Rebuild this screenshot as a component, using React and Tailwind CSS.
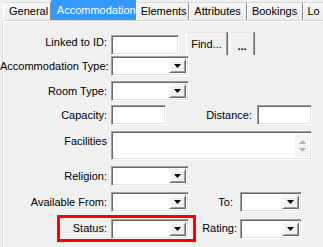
import React from "react";

const Sunken = ({ className = "", children }) => (
  <div
    className={
      "box-border border border-t-[#a0a0a0] border-l-[#a0a0a0] border-r-white border-b-white bg-white shadow-[inset_1px_1px_0_#696969,inset_-1px_-1px_0_#e3e3e3] " +
      className
    }
  >
    {children}
  </div>
);

const Arrow = () => (
  <svg width="7" height="4" viewBox="0 0 7 4">
    <path d="M0 0H7L3.5 4Z" fill="#000" />
  </svg>
);

const Combo = ({ className = "" }) => (
  <Sunken className={"flex justify-end p-[2px] " + className}>
    <div className="box-border w-[17px] h-full flex items-center justify-center bg-[#f0f0f0] border border-t-[#f0f0f0] border-l-[#f0f0f0] border-r-[#696969] border-b-[#696969] shadow-[inset_1px_1px_0_#ffffff,inset_-1px_-1px_0_#a0a0a0]">
      <Arrow />
    </div>
  </Sunken>
);

const Label = ({ className = "", children }) => (
  <div className={"text-right whitespace-nowrap " + className}>{children}</div>
);

const Tab = ({ className = "", children }) => (
  <div
    className={
      "box-border h-[18px] flex items-center border-l border-l-white border-r border-r-[#8c8c8c] border-t border-t-[#d9d9d9] bg-gradient-to-b from-[#f7f7f7] to-[#ebebeb] whitespace-nowrap overflow-hidden " +
      className
    }
  >
    {children}
  </div>
);

export default function App() {
  return (
    <div
      className="w-[323px] h-[247px] overflow-hidden bg-[#f0f0f0] text-[11px] leading-[13px] text-black"
      style={{ fontFamily: '"Liberation Sans", Arial, sans-serif' }}
    >
      {/* tab strip */}
      <div className="flex items-end h-[20px]">
        <Tab className="ml-[3px] w-[49px] pl-[5px] border-l-[#d9d9d9]">General</Tab>
        <div className="box-border h-[20px] w-[87px] flex items-center pl-[6px] bg-[#3399ff] text-white whitespace-nowrap">
          Accommodation
        </div>
        <Tab className="w-[55px] pl-[4px]">Elements</Tab>
        <Tab className="w-[59px] pl-[4px]">Attributes</Tab>
        <Tab className="w-[58px] pl-[4px]">Bookings</Tab>
        <Tab className="w-[20px] pl-[3px] border-r-0">Lo</Tab>
      </div>

      {/* panel */}
      <div className="ml-[2px] h-[227px] border-t border-l border-[#d9d9d9] shadow-[inset_1px_1px_0_#ffffff]">
        {/* Linked to ID */}
        <div className="flex items-start -ml-[3px] mt-[11px] h-[23px]">
          <Label className="w-[107px] mt-[4px]">Linked to ID:</Label>
          <Sunken className="ml-[4px] mt-[3px] w-[68px] h-[20px]" />
          <div className="box-border ml-[7px] w-[41px] h-[23px] flex items-center justify-center border-t border-t-[#e3e3e3] border-l border-l-white border-r border-r-[#a0a0a0] shadow-[1px_0_0_#696969]">
            Find...
          </div>
          <div className="box-border ml-[3px] w-[24px] h-[23px] flex items-center justify-center border-t border-t-[#e3e3e3] border-l border-l-white border-r border-r-[#a0a0a0] shadow-[1px_0_0_#696969] font-bold pt-[5px]">
            ...
          </div>
        </div>

        {/* Accommodation Type */}
        <div className="flex items-center -ml-[3px] mt-[1px] h-[20px]">
          <Label className="w-[107px]">Accommodation Type:</Label>
          <Combo className="ml-[4px] w-[78px] h-[20px]" />
        </div>

        {/* Room Type */}
        <div className="flex items-center -ml-[3px] mt-[5px] h-[20px]">
          <Label className="w-[107px]">Room Type:</Label>
          <Combo className="ml-[4px] w-[78px] h-[20px]" />
        </div>

        {/* Capacity / Distance */}
        <div className="flex items-center -ml-[3px] mt-[4px] h-[20px]">
          <Label className="w-[107px]">Capacity:</Label>
          <Sunken className="ml-[4px] w-[55px] h-[20px]" />
          <Label className="w-[86px]">Distance:</Label>
          <Sunken className="ml-[5px] w-[55px] h-[20px]" />
        </div>

        {/* Facilities */}
        <div className="flex items-start -ml-[3px] mt-[6px] h-[29px]">
          <Label className="w-[107px] mt-[4px]">Facilities</Label>
          <Sunken className="ml-[4px] w-[201px] h-[29px] flex justify-end p-[2px]">
            <div className="w-[14px] h-full bg-[#f4f4f4] flex flex-col items-center justify-center gap-[4px]">
              <svg width="7" height="4" viewBox="0 0 7 4">
                <path d="M0 4H7L3.5 0Z" fill="#b4b4b4" />
              </svg>
              <svg width="7" height="4" viewBox="0 0 7 4">
                <path d="M0 0H7L3.5 4Z" fill="#b4b4b4" />
              </svg>
            </div>
          </Sunken>
        </div>

        {/* Religion */}
        <div className="flex items-center -ml-[3px] mt-[6px] h-[20px]">
          <Label className="w-[107px]">Religion:</Label>
          <Combo className="ml-[4px] w-[78px] h-[20px]" />
        </div>

        {/* Available From / To */}
        <div className="flex items-center -ml-[3px] mt-[6px] h-[20px]">
          <Label className="w-[107px]">Available From:</Label>
          <Combo className="ml-[4px] w-[78px] h-[20px]" />
          <Label className="w-[44px]">To:</Label>
          <Combo className="ml-[7px] w-[62px] h-[20px]" />
        </div>

        {/* Status / Rating */}
        <div className="flex items-center -ml-[3px] mt-[3px] h-[27px]">
          <div className="box-border ml-[57px] h-[27px] flex items-center border-[3px] border-[#ff0000] pr-[4px]">
            <Label className="w-[47px]">Status:</Label>
            <Combo className="ml-[4px] w-[78px] h-[20px] mt-[1px]" />
          </div>
          <Label className="w-[41px]">Rating:</Label>
          <Combo className="ml-[3px] w-[62px] h-[20px]" />
        </div>
      </div>
    </div>
  );
}
